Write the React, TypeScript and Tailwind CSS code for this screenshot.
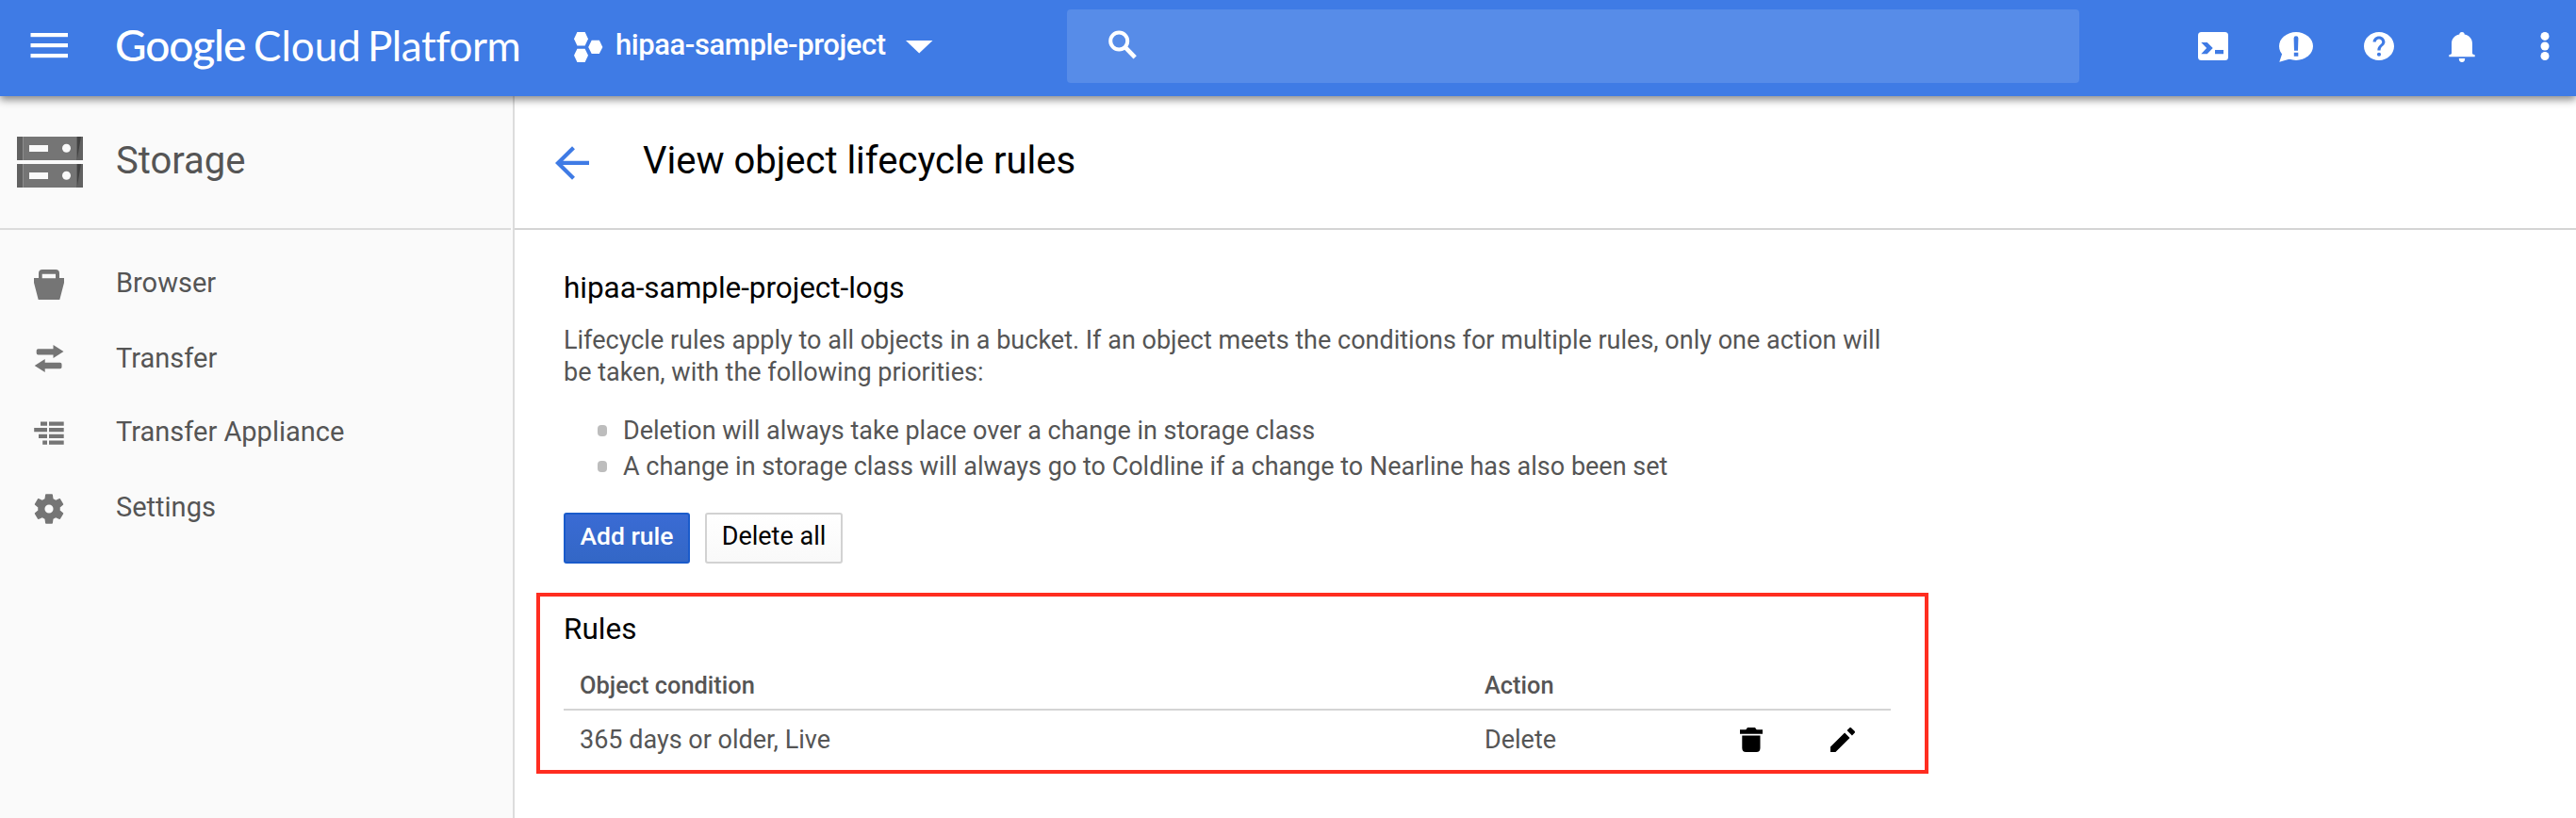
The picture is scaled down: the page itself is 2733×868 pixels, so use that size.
import React from "react";

function MenuIcon() {
  return (
    <svg width="40" height="27" viewBox="0 0 40 27" fill="#fff">
      <rect x="0.5" y="0" width="39.5" height="4.2" />
      <rect x="0.5" y="11" width="39.5" height="4.2" />
      <rect x="0.5" y="22" width="39.5" height="4.2" />
    </svg>
  );
}

function ProjectIcon() {
  return (
    <svg width="31" height="32" viewBox="0 0 31 32" fill="#fff">
      <path d="M0 7.2 3.4 0h8.2L15 7.2l-3.4 7.2H3.4z" />
      <path d="M0 24.8l3.4-7h8.2l3.4 7-3.4 7.2H3.4z" />
      <path d="M15.2 16l3.5-7.2h8.1l3.6 7.2-3.6 7.1h-8.1z" />
    </svg>
  );
}

function SearchIcon() {
  return (
    <svg width="32" height="32" viewBox="0 0 32 32" fill="none" stroke="#fff" strokeWidth="4">
      <circle cx="11.2" cy="11.5" r="9" />
      <path d="M16.8 17.1 28.2 28.8" strokeWidth="4.6" />
    </svg>
  );
}

function ShellIcon() {
  return (
    <svg width="40" height="40" viewBox="0 0 40 40">
      <rect x="4" y="4" width="32" height="30" rx="3.5" fill="#fff" />
      <path d="M7.3 15h6.4l6 6.1-6 6.2H7.3l5.8-6.2zM22 23.1h9v4.2h-9z" fill="#3f7be5" />
    </svg>
  );
}

function FeedbackIcon() {
  return (
    <svg width="40" height="40" viewBox="0 0 40 40">
      <ellipse cx="20" cy="19" rx="18" ry="15" fill="#fff" />
      <path d="M3.5 24 5.2 27 2.3 35.8 13.5 32.6 18 28z" fill="#fff" />
      <path d="M17.6 10.4a2.4 2.2 0 0 1 4.8 0l-.4 13.3h-4zM17.8 25.7h4.5v4.1h-4.5z" fill="#3f7be5" />
    </svg>
  );
}

function HelpIcon() {
  return (
    <svg width="40" height="40" viewBox="0 0 40 40" fill="#fff">
      <path
        transform="translate(0.8 1) scale(1.6 1.5)"
        fillRule="evenodd"
        d="M12 2C6.48 2 2 6.48 2 12s4.48 10 10 10 10-4.48 10-10S17.52 2 12 2zM10.7 17.8a1.3 1.3 0 1 0 2.6 0a1.3 1.3 0 1 0-2.6 0zM15.07 11.25l-.9.92C13.45 12.9 13 13.5 13 15h-2v-.5c0-1.1.45-2.1 1.17-2.83l1.24-1.26c.37-.36.59-.86.59-1.41 0-1.1-.9-2-2-2s-2 .9-2 2H8c0-2.21 1.79-4 4-4s4 1.79 4 4c0 .88-.36 1.68-.93 2.25z"
      />
    </svg>
  );
}

function BellIcon() {
  return (
    <svg width="40" height="40" viewBox="0 0 40 40" fill="#fff">
      <path d="M17.3 6.6a2.7 2.6 0 0 1 5.4 0C28 7.6 31 11.4 31 16.5V26.5q0 .8 1 1.2l1.7.6v2H6.3v-2l1.7-.6q1-.4 1-1.2V16.5C9 11.4 12 7.6 17.3 6.6z" />
      <path d="M16.8 32h6.4a3.2 4 0 0 1-6.4 0z" />
    </svg>
  );
}

function MoreIcon() {
  return (
    <svg width="40" height="40" viewBox="0 0 40 40" fill="#fff">
      <circle cx="20" cy="8.4" r="4.5" />
      <circle cx="20" cy="19" r="4.5" />
      <circle cx="20" cy="29.5" r="4.5" />
    </svg>
  );
}

function StorageUnit() {
  return (
    <svg width="70" height="25" viewBox="0 0 70 25">
      <rect width="70" height="25" fill="#757575" />
      <rect width="6" height="25" fill="#616161" />
      <rect x="6" width="1" height="25" fill="#8e8e8e" />
      <rect x="63" width="7" height="25" fill="#616161" />
      <path d="M64 0h4L64 23z" fill="#424242" />
      <rect x="13" y="9" width="20" height="7" fill="#fafafa" />
      <circle cx="52.5" cy="12.3" r="4.5" fill="#fafafa" />
    </svg>
  );
}

function BucketIcon() {
  return (
    <svg width="32" height="32" viewBox="0 0 32 32" fill="#757575">
      <path
        fillRule="evenodd"
        d="M5 9V4q0-4 4-4h14q4 0 4 4v5h5v5L27.3 32H4.7L0 14V9zM8.7 4.7V9.3H23V4.7z"
      />
    </svg>
  );
}

function TransferIcon() {
  return (
    <svg width="32" height="30" viewBox="0 0 32 30" fill="#757575">
      <path d="M4.5 4.2H20.5V0L31.5 7 20.5 14V10.6H4.5q-1.8 0-1.8-1.8V6q0-1.8 1.8-1.8z" />
      <path d="M27.7 25.3H11.7V29L.7 21.9 11.7 14.9V18.8H27.7q1.8 0 1.8 1.8v2.9q0 1.8-1.8 1.8z" />
    </svg>
  );
}

function ApplianceIcon() {
  return (
    <svg width="32" height="25" viewBox="0 0 32 25" fill="#757575">
      <path d="M16 .4h15.7v4.3H16zM16 7h15.7v4.3H16zM16 13.7h15.7V18H16zM16 20.4h15.7v4.3H16z" />
      <path d="M7 .4h7v4.3H7zM.2 7H14v4.3H.2zM5 13.7h9V18H5zM9.2 20.4H14v4.3H9.2z" />
    </svg>
  );
}

function GearIcon() {
  return (
    <svg width="32" height="32" viewBox="1.8 1.8 20.4 20.4" fill="#757575">
      <path
        fillRule="evenodd"
        d="M19.43 12.98c.04-.32.07-.64.07-.98s-.03-.66-.07-.98l2.11-1.65c.19-.15.24-.42.12-.64l-2-3.46c-.12-.22-.39-.3-.61-.22l-2.49 1c-.52-.4-1.08-.73-1.69-.98l-.38-2.65C14.46 2.18 14.25 2 14 2h-4c-.25 0-.46.18-.49.42l-.38 2.65c-.61.25-1.17.59-1.69.98l-2.49-1c-.23-.09-.49 0-.61.22l-2 3.46c-.13.22-.07.49.12.64l2.11 1.65c-.04.32-.07.65-.07.98s.03.66.07.98l-2.11 1.65c-.19.15-.24.42-.12.64l2 3.46c.12.22.39.3.61.22l2.49-1c.52.4 1.08.73 1.69.98l.38 2.65c.03.24.24.42.49.42h4c.25 0 .46-.18.49-.42l.38-2.65c.61-.25 1.17-.59 1.69-.98l2.49 1c.23.09.49 0 .61-.22l2-3.46c.12-.22.07-.49-.12-.64l-2.11-1.65zM12 14.9a2.9 2.9 0 1 1 0-5.8 2.9 2.9 0 0 1 0 5.8z"
      />
    </svg>
  );
}

function BackIcon() {
  return (
    <svg width="36" height="36" viewBox="0 0 36 36" fill="none" stroke="#3f7be5" strokeWidth="4.2">
      <path d="M36 17.9H4M19.5 1.8 3 17.9l16.5 16.3" />
    </svg>
  );
}

function TrashIcon() {
  return (
    <svg width="24" height="26" viewBox="0 0 24 26" fill="#000">
      <path d="M0 2.2h6.3L8 0h8l1.7 2.2H24v4.5H0z" />
      <path d="M2.3 8.4h19.2v13.4q0 4.2-4 4.2H6.3q-4 0-4-4.2z" />
    </svg>
  );
}

function PencilIcon() {
  return (
    <svg width="26" height="26" viewBox="3 3 18 18" fill="#000">
      <path d="M3 17.25V21h3.75L17.2 10.55l-3.75-3.75L3 17.25zM20.71 7.04c.39-.39.39-1.02 0-1.41l-2.34-2.34c-.39-.39-1.02-.39-1.41 0l-1.83 1.83 3.75 3.75 1.83-1.83z" />
    </svg>
  );
}

const navItems = [
  { label: "Browser", icon: <BucketIcon />, row: "h-[80px]", shift: "pt-[3px]" },
  { label: "Transfer", icon: <TransferIcon />, row: "h-[80px]", shift: "pt-[1px]" },
  { label: "Transfer Appliance", icon: <ApplianceIcon />, row: "h-[76px]", shift: "pt-[2px]" },
  { label: "Settings", icon: <GearIcon />, row: "h-[84px]", shift: "pt-[4px]" },
];

const actions = [
  { name: "Cloud Shell", icon: <ShellIcon /> },
  { name: "Feedback", icon: <FeedbackIcon /> },
  { name: "Help", icon: <HelpIcon /> },
  { name: "Notifications", icon: <BellIcon /> },
  { name: "More", icon: <MoreIcon /> },
];

function Header() {
  return (
    <header className="relative z-10 flex h-[102px] shrink-0 items-start bg-[#3f7be5] text-white shadow-[0_4px_8px_rgba(0,0,0,0.45)]">
      <button className="ml-8 mt-[35px] shrink-0" aria-label="Menu">
        <MenuIcon />
      </button>
      <div className="ml-[50px] mt-[20px] flex h-14 w-[487px] shrink-0 items-baseline font-['Lato',sans-serif] text-[44px] leading-[56px] whitespace-nowrap">
        <span className="w-[147px] text-[46px] font-medium tracking-[-1.1px]">Google</span>
        <span className="w-[121px]">Cloud</span>
        <span className="tracking-[-0.45px]">Platform</span>
      </div>
      <div className="mt-[34px] shrink-0">
        <ProjectIcon />
      </div>
      <div className="ml-[13px] mt-7 w-[288px] shrink-0 text-[31px] leading-10 font-medium tracking-[-0.42px] whitespace-nowrap">
        hipaa-sample-project
      </div>
      <svg className="ml-[20px] mt-[43px] shrink-0" width="29" height="14" viewBox="0 0 29 14" fill="#fff">
        <path d="M0 0h28.5L14.2 13.5z" />
      </svg>
      <div className="ml-[142px] mt-[10px] h-[78px] w-[1074px] shrink-0 rounded-[4px] bg-[#578ce8] pt-[22px] pl-[44px]">
        <SearchIcon />
      </div>
      <div className="mt-[30px] ml-[122px] flex shrink-0 gap-12">
        {actions.map((a) => (
          <button key={a.name} aria-label={a.name} className="w-10 shrink-0">
            {a.icon}
          </button>
        ))}
      </div>
    </header>
  );
}

function Sidebar() {
  return (
    <aside className="w-[546px] shrink-0 border-r-2 border-[#dcdcdc] bg-[#fafafa] text-[#555]">
      <div className="flex h-[142px] w-[542px] border-b-2 border-[#dcdcdc] pl-[18px]">
        <div className="mt-[43px] flex w-[70px] flex-col gap-1">
          <StorageUnit />
          <StorageUnit />
        </div>
        <div className="ml-[35px] mt-[49px] text-[40px] leading-[40px]">Storage</div>
      </div>
      <nav className="pt-4">
        {navItems.map((item) => (
          <div key={item.label} className={`flex items-center pl-9 ${item.row}`}>
            <div className={`w-8 ${item.shift}`}>{item.icon}</div>
            <div className="ml-[55px] text-[29px] leading-[40px]">{item.label}</div>
          </div>
        ))}
      </nav>
    </aside>
  );
}

function Bullet({ children }: { children: React.ReactNode }) {
  return (
    <li className="flex h-[38px] items-center">
      <span className="mr-[17px] h-3 w-[10px] rounded-[4px] bg-[#bdbdbd]" />
      <span className="pt-px">{children}</span>
    </li>
  );
}

function Main() {
  return (
    <main className="flex-1 bg-white">
      <div className="flex h-[142px] border-b-2 border-[#d4d4d4] pl-[43px]">
        <div className="mt-[53px]">
          <BackIcon />
        </div>
        <h1 className="ml-[57px] mt-[49px] text-[40px] leading-[40px] text-black">View object lifecycle rules</h1>
      </div>

      <div className="pl-[23px] text-[27px] text-[#555]">
        <div className="pl-[29px]">
          <h2 className="pt-[42px] text-[31.5px] leading-[40px] tracking-[-0.05px] text-black">hipaa-sample-project-logs</h2>
          <p className="mt-[18px] leading-[34px] whitespace-nowrap">
            Lifecycle rules apply to all objects in a bucket. If an object meets the conditions for multiple rules, only one action will
            <br />
            be taken, with the following priorities:
          </p>
          <ul className="mt-[26px] pl-[36px]">
            <Bullet>Deletion will always take place over a change in storage class</Bullet>
            <Bullet>A change in storage class will always go to Coldline if a change to Nearline has also been set</Bullet>
          </ul>
          <div className="mt-[30px] flex gap-4">
            <button className="h-[54px] w-[134px] rounded-[3px] border-2 border-[#1a5bcb] bg-gradient-to-b from-[#3a6bd4] to-[#3367c6] pb-[5px] text-[26.5px] font-medium whitespace-nowrap text-white">
              Add rule
            </button>
            <button className="h-[54px] w-[146px] rounded-[3px] border-2 border-[#d2d2d2] bg-gradient-to-b from-white to-[#f9f9f9] pb-[3px] whitespace-nowrap text-black">
              Delete all
            </button>
          </div>
        </div>

        <section className="mt-[31px] h-[192px] w-[1477px] border-4 border-[#ff2d20] pl-[25px]">
          <h3 className="pt-[15px] text-[31.5px] leading-[40px] text-black">Rules</h3>
          <div className="mt-[17px] flex h-[49px] w-[1408px] border-b-2 border-[#d4d4d4] pl-[17px] pt-[2px] text-[25.4px] leading-[40px] font-medium">
            <div className="w-[960px]">Object condition</div>
            <div>Action</div>
          </div>
          <div className="flex pl-[17px] pt-[11px] leading-[40px]">
            <div className="w-[960px]">365 days or older, Live</div>
            <div className="w-[271px]">Delete</div>
            <div className="flex gap-[72px] pt-[7px]">
              <TrashIcon />
              <PencilIcon />
            </div>
          </div>
        </section>
      </div>
    </main>
  );
}

export default function App() {
  return (
    <div className="flex h-[868px] w-[2733px] flex-col overflow-hidden bg-white font-['Roboto',sans-serif]">
      <Header />
      <div className="flex flex-1">
        <Sidebar />
        <Main />
      </div>
    </div>
  );
}
